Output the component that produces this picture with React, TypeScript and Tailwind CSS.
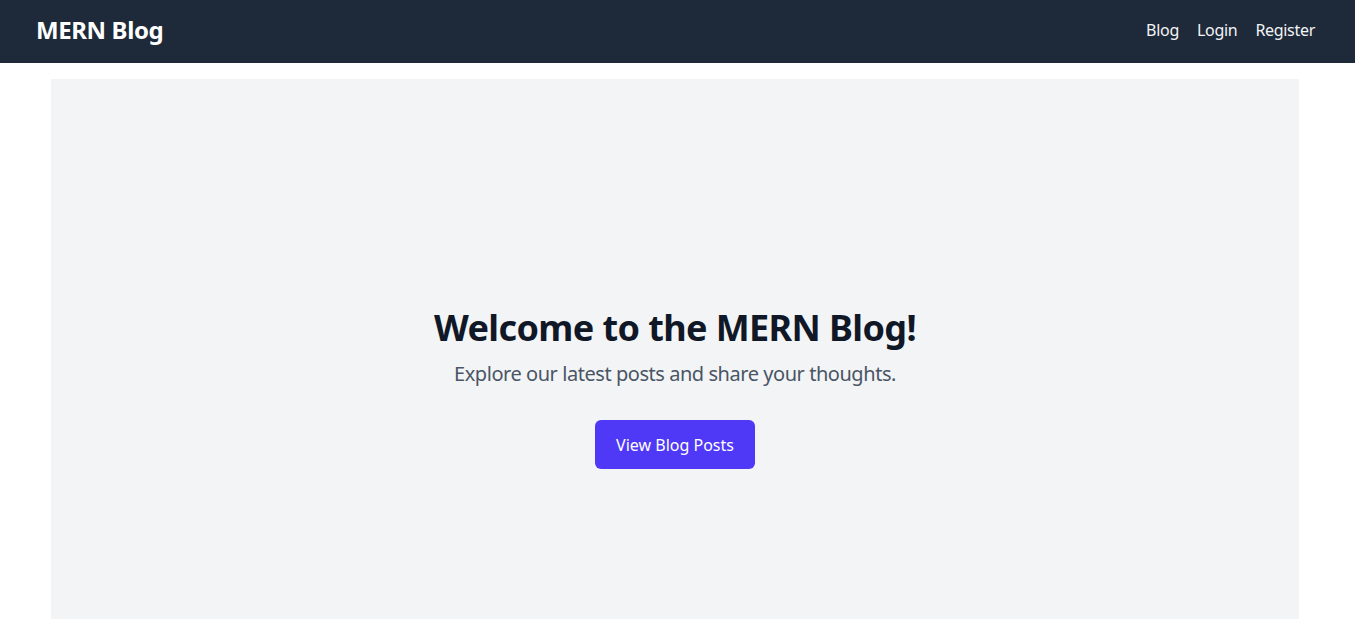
export default function App() {
  return (
    <div className="min-h-screen bg-white font-['Noto_Sans',sans-serif]">
      {/* Navbar */}
      <nav className="h-[63px] bg-gray-800 text-white flex items-center justify-between pl-[36px] pr-[40px] pb-[3px]">
        <a href="#" className="text-2xl font-bold tracking-[-0.4px]">
          MERN Blog
        </a>
        <div className="flex items-center gap-[18px] text-base text-gray-100 tracking-[-0.3px]">
          <a href="#">Blog</a>
          <a href="#">Login</a>
          <a href="#">Register</a>
        </div>
      </nav>

      {/* Hero */}
      <main className="w-[1248px] ml-[51px] mt-4">
        <section className="min-h-[619px] bg-gray-100 flex flex-col items-center justify-center text-center">
          <h1 className="text-4xl font-bold text-gray-900 mb-3 tracking-[-0.6px]">
            Welcome to the MERN Blog!
          </h1>
          <p className="text-xl text-gray-600 mb-8 tracking-[-0.45px]">
            Explore our latest posts and share your thoughts.
          </p>
          <a
            href="#"
            className="h-[49px] w-[160px] flex items-center justify-center rounded-md bg-indigo-600 text-white text-base"
          >
            View Blog Posts
          </a>
        </section>
      </main>
    </div>
  );
}
